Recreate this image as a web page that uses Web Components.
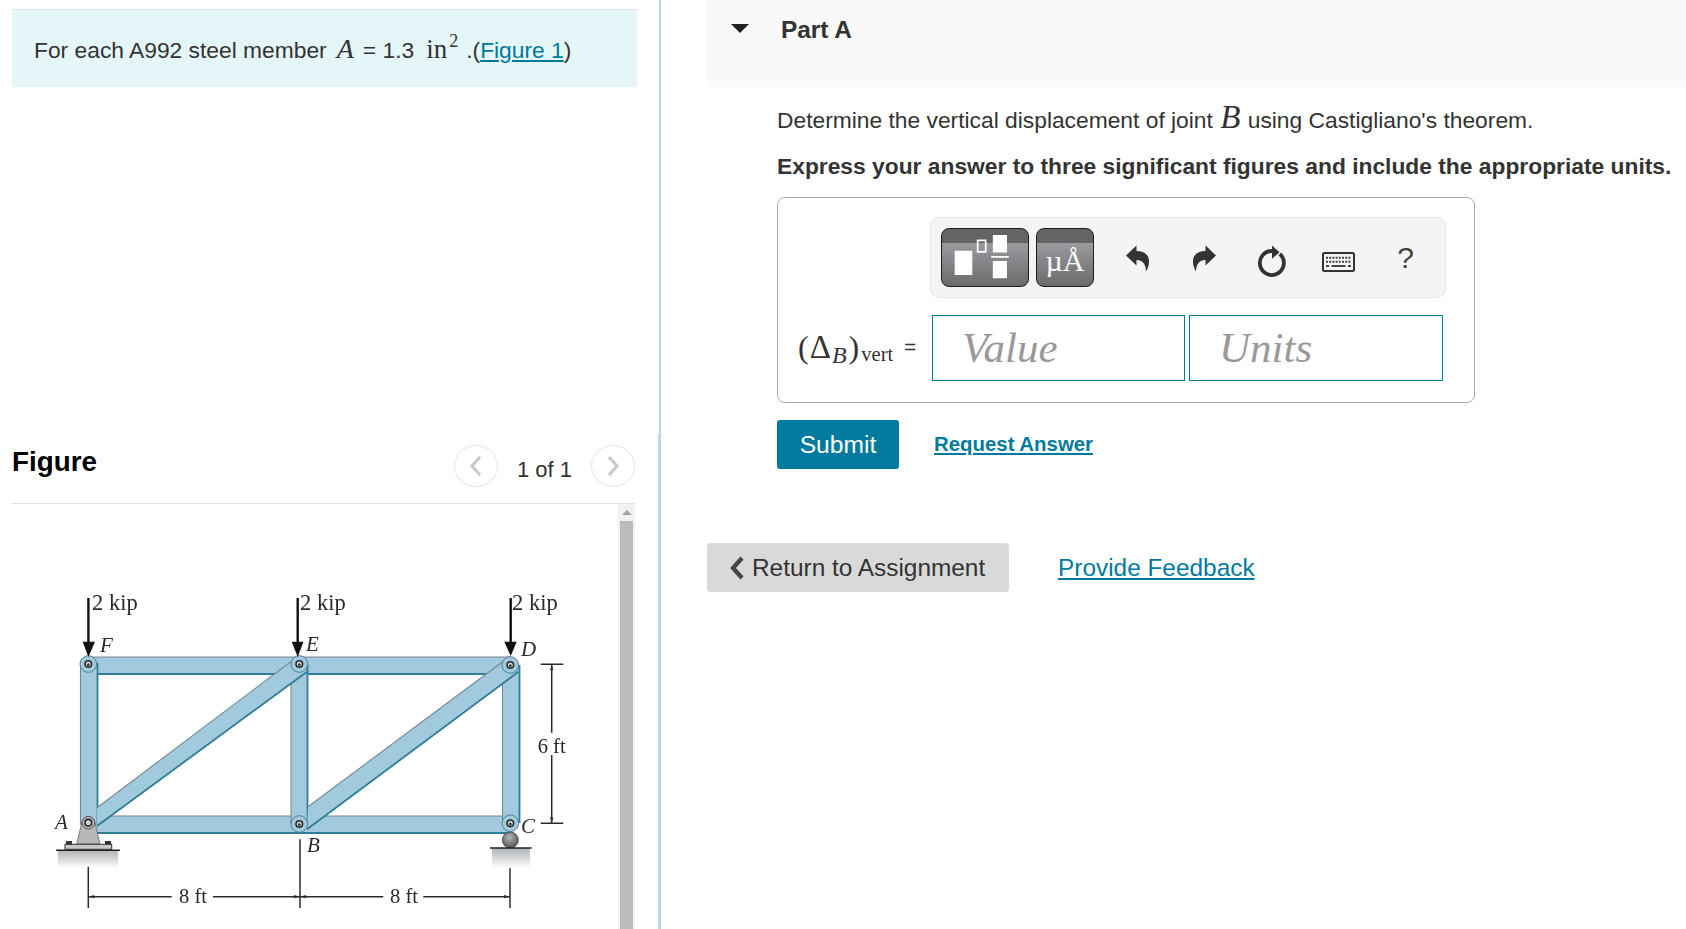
<!DOCTYPE html>
<html lang="en">
<head>
<meta charset="utf-8">
<title>Part A</title>
<style>
  html, body { margin: 0; height: 100%; background: #fff; overflow: hidden; }
  body { font-family: "Liberation Sans", Arial, sans-serif; color: #333; }
</style>
</head>
<body>
<item-layout>
  <div slot="left">
    <intro-banner>For each A992 steel member<math-var style="margin:0 9px 0 10px">A</math-var>= 1.3<math-unit></math-unit><span style="margin-left:8px">.(</span><text-link>Figure 1</text-link>)</intro-banner>
    <figure-panel></figure-panel>
  </div>
  <div slot="right">
    <part-head>Part A</part-head>
    <part-body>
      <p style="margin:0 0 16px;height:30px;line-height:30px">Determine the vertical displacement of joint <math-var style="margin:0 1px;font-size:33px;line-height:0">B</math-var> using Castigliano's theorem.</p>
      <p style="margin:0 0 16px;height:30px;line-height:30px;font-weight:bold;white-space:nowrap">Express your answer to three significant figures and include the appropriate units.</p>
      <answer-box></answer-box>
      <answer-actions></answer-actions>
    </part-body>
    <page-footer></page-footer>
  </div>
</item-layout>

<script>
function comp(tag, html) {
  customElements.define(tag, class extends HTMLElement {
    constructor() {
      super();
      this.attachShadow({ mode: "open" }).innerHTML = html.trim();
    }
  });
}

comp("item-layout", `
  <style>
    :host { display: flex; height: 929px; overflow: hidden; }
    .left { width: 658px; flex: none; }
    .rule { width: 3px; flex: none; display: flex; flex-direction: column; }
    .rule .a { height: 434px; width: 2px; margin-left: 1px; background: #c3d3e6; }
    .rule .b { flex: 1; background: #c3d3e6; }
    .right { margin-left: 46px; flex: 1; min-width: 0; }
  </style>
  <div class="left"><slot name="left"></slot></div>
  <div class="rule"><div class="a"></div><div class="b"></div></div>
  <div class="right"><slot name="right"></slot></div>
`);

comp("math-var", `<style>:host { display: inline-block; font: italic 28px/1 "Liberation Serif", serif; color: #333; }</style><slot></slot>`);

comp("math-unit", `<style>
    :host { display: inline-block; margin-left: 12px; font: 27px/1 "Liberation Serif", serif; }
    sup { font-size: 18px; line-height: 0; vertical-align: 11px; margin-left: 2px; }
  </style>in<sup>2</sup>`);

comp("text-link", `<style>:host { display: inline; color: #007a9e; text-decoration: underline; }</style><slot></slot>`);

comp("intro-banner", `
  <style>
    :host {
      display: block; box-sizing: border-box; margin: 9px 0 0 12px; width: 625px; height: 78px;
      padding: 24px 0 0 22px; background: #e5f6f8; border-top: 1px solid #dbe3e6;
      font-size: 22.8px; line-height: 32px; color: #333; white-space: nowrap;
    }
  </style>
  <slot></slot>
`);

comp("pager-button", `
  <style>
    :host {
      display: flex; align-items: center; justify-content: center; box-sizing: border-box;
      width: 44px; height: 42px; border: 1px solid #e6e6e6; border-radius: 50%;
    }
  </style>
  <slot></slot>
`);

comp("figure-pager", `
  <style>
    :host { display: flex; align-items: flex-start; }
    span { width: 93px; text-align: center; font-size: 22px; line-height: 42px; padding-top: 4px; color: #333; }
    svg { display: block; }
  </style>
  <pager-button><svg width="14" height="22" viewBox="0 0 14 22"><path d="M11 2 3 11l8 9" fill="none" stroke="#c9c9c9" stroke-width="3"/></svg></pager-button>
  <span>1 of 1</span>
  <pager-button><svg width="14" height="22" viewBox="0 0 14 22"><path d="M3 2l8 9-8 9" fill="none" stroke="#c9c9c9" stroke-width="3"/></svg></pager-button>
`);

comp("fake-scrollbar", `
  <style>
    :host { display: flex; flex-direction: column; box-sizing: border-box; width: 17px; padding: 0 2px; background: #f1f1f1; }
    .up { height: 17px; display: flex; align-items: center; justify-content: center; }
    .up i { width: 0; height: 0; border: 5px solid transparent; border-top: 0; border-bottom: 5px solid #a3a3a3; }
    .thumb { flex: 1; background: #bbb; }
  </style>
  <div class="up"><i></i></div>
  <div class="thumb"></div>
`);

comp("truss-figure", `
  <style>
    :host { display: block; width: 606px; height: 425px; }
    svg { display: block; filter: blur(.6px); }
    text { font-family: "Liberation Serif", serif; fill: #2a2a2a; }
    .lbl { font-style: italic; font-size: 21px; }
    .kip { font-size: 22.5px; }
    .dim { font-size: 20.5px; }
    .m { fill: #a2cade; }
    .hi { stroke: #78878f; stroke-width: 1.1; fill: none; }
    .lo { stroke: #2f7d96; stroke-width: 1.8; fill: none; }
    .d { stroke: #2b2b2b; stroke-width: 1.5; fill: none; }
    .f { stroke: #111; stroke-width: 2.4; fill: none; }
  </style>
  <svg width="606" height="425" viewBox="12 504 606 425">
    <defs>
      <linearGradient id="sh" x1="0" y1="0" x2="0" y2="1">
        <stop offset="0" stop-color="#aeb2b6"/><stop offset="1" stop-color="#fff"/>
      </linearGradient>
      <radialGradient id="ball" cx=".45" cy=".35" r=".7">
        <stop offset="0" stop-color="#b5b5b5"/><stop offset="1" stop-color="#4d4d4d"/>
      </radialGradient>
      <g id="pin">
        <circle r="8.3" fill="#a2cade" stroke="#4d7f92" stroke-width="1"/>
        <circle r="3.3" fill="#cfd6d8" stroke="#2b2b2b" stroke-width="1.6"/>
        <circle r="1.5" cy=".7" fill="#444"/>
      </g>
    </defs>

    <!-- shadows and supports -->
    <rect x="58" y="850" width="60" height="18" fill="url(#sh)"/>
    <rect x="492" y="848" width="38" height="20" fill="url(#sh)"/>

    <!-- horizontal members -->
    <rect class="m" x="88" y="816" width="423" height="17"/>
    <path class="hi" d="M88 816H511"/><path class="lo" d="M88 833H511"/>
    <rect class="m" x="88" y="657" width="423" height="17"/>
    <path class="hi" d="M88 657H511"/><path class="lo" d="M88 674H511"/>

    <!-- verticals -->
    <rect class="m" x="80.5" y="663" width="17" height="162"/>
    <path class="hi" d="M80.5 663V825"/><path class="lo" d="M97.5 663V825"/>
    <rect class="m" x="291" y="664" width="16.5" height="160"/>
    <path class="hi" d="M291 664V824"/><path class="lo" d="M307.5 664V824"/>
    <rect class="m" x="502.5" y="665" width="17" height="158"/>
    <path class="hi" d="M502.5 665V823"/><path class="lo" d="M519.5 665V823"/>

    <!-- diagonals -->
    <path class="m" d="M97 807.7 293 660 307 671.7 97 826Z"/>
    <path class="hi" d="M97 807.7 293 660"/><path class="lo" d="M97 826 307 671.7"/>
    <path class="m" d="M308 806.7 505 660 518.5 671.7 307 829.3Z"/>
    <path class="hi" d="M308 806.7 505 660"/><path class="lo" d="M307 829.3 518.5 671.7"/>

    <!-- pins -->
    <use href="#pin" x="88.3" y="664"/>
    <use href="#pin" x="299.3" y="664"/>
    <use href="#pin" x="510.3" y="665"/>
    <use href="#pin" x="299.3" y="824"/>
    <use href="#pin" x="510.3" y="823.3"/>

    <!-- support at A -->
    <path d="M81.7 823C83 815 94 815 95 823L100 844H76.7Z" fill="#b8b8b8" stroke="#666" stroke-width=".8"/>
    <circle cx="88.3" cy="822.7" r="6.3" fill="#b8b8b8" stroke="#555" stroke-width="1"/>
    <circle cx="88.3" cy="822.7" r="3.3" fill="#cfd6d8" stroke="#2b2b2b" stroke-width="1.6"/>
    <rect x="65" y="844.3" width="46.7" height="5" fill="#c9c9c9" stroke="#333" stroke-width="1"/>
    <rect x="66" y="841" width="6" height="3.5" fill="#333"/><rect x="105" y="841" width="6" height="3.5" fill="#333"/>
    <path d="M56 850.3H120" stroke="#222" stroke-width="1.6"/>

    <!-- roller at C -->
    <circle cx="510.3" cy="840" r="8" fill="url(#ball)" stroke="#444" stroke-width=".8"/>
    <path d="M490 848H531.7" stroke="#222" stroke-width="1.6"/>

    <!-- loads -->
    <path class="f" d="M88.4 598V645"/><path d="M82.7 641.7H95L88.4 657Z" fill="#111"/>
    <path class="f" d="M297.7 598V645"/><path d="M291.7 641.7H303.5L297.7 657Z" fill="#111"/>
    <path class="f" d="M510.7 598V645"/><path d="M504.3 641.7H516.7L510.7 656Z" fill="#111"/>
    <text class="kip" x="92" y="610">2 kip</text>
    <text class="kip" x="300" y="610">2 kip</text>
    <text class="kip" x="512" y="610">2 kip</text>

    <!-- joint letters -->
    <text class="lbl" x="100" y="652">F</text>
    <text class="lbl" x="306" y="651">E</text>
    <text class="lbl" x="521" y="656">D</text>
    <text class="lbl" x="55" y="829">A</text>
    <text class="lbl" x="307" y="852">B</text>
    <text class="lbl" x="521" y="833">C</text>

    <!-- dimensions -->
    <path class="d" d="M88.3 866.7V908M300 839.3V908M510 868.3V908"/>
    <path class="d" d="M88.3 896.7H171.7M213 896.7H383.3M423.3 896.7H510"/>
    <path d="M88.3 896.7l6-1.6v3.2ZM300 896.7l-6-1.6v3.2ZM300 896.7l6-1.6v3.2ZM510 896.7l-6-1.6v3.2Z" fill="#2b2b2b"/>
    <text class="dim" x="193" y="902.7" text-anchor="middle">8 ft</text>
    <text class="dim" x="404" y="902.7" text-anchor="middle">8 ft</text>
    <path class="d" d="M540.7 664.3H563.3M540.7 823.3H563.3M551.7 664.3V732.7M551.7 755V823.3"/>
    <path d="M551.7 664.3l-1.6 6h3.2ZM551.7 823.3l-1.6-6h3.2Z" fill="#2b2b2b"/>
    <text class="dim" x="551.7" y="752.7" text-anchor="middle">6 ft</text>
  </svg>
`);

comp("figure-panel", `
  <style>
    :host { display: block; margin: 358px 0 0 12px; width: 623px; }
    header {
      display: flex; justify-content: space-between; box-sizing: border-box; height: 59px;
      border-bottom: 1px solid #ddd;
    }
    h2 { margin: 1px 0 0; font-size: 27.8px; line-height: 32px; color: #000; }
    .view { display: flex; height: 425px; }
  </style>
  <header><h2>Figure</h2><figure-pager></figure-pager></header>
  <div class="view"><truss-figure></truss-figure><fake-scrollbar></fake-scrollbar></div>
`);

comp("part-head", `
  <style>
    :host {
      display: flex; align-items: flex-start; gap: 32px; box-sizing: border-box; height: 87px;
      padding: 14px 0 0 24px; background: #f9f9f9;
      font-size: 24.4px; line-height: 32px; font-weight: bold; color: #333;
    }
    i { width: 0; height: 0; margin-top: 10px; border: 9px solid transparent; border-bottom: 0; border-top: 9px solid #222; }
  </style>
  <i></i><slot></slot>
`);

comp("part-body", `
  <style>
    :host { display: block; padding: 18px 0 0 70px; font-size: 22.8px; color: #333; }
  </style>
  <slot></slot>
`);

comp("tool-button", `
  <style>
    :host {
      display: flex; align-items: center; justify-content: center; box-sizing: border-box; height: 59px;
      border: 1px solid #1c1c1c; border-radius: 8px; color: #fff;
      background: linear-gradient(#646464 0 25%, #9a9a9f 25%, #6b6b6d 100%);
    }
  </style>
  <slot></slot>
`);

comp("answer-toolbar", `
  <style>
    :host {
      display: flex; align-items: center; box-sizing: border-box; width: 516px; height: 81px;
      margin-left: 152px; padding: 0 0 0 10px; background: #f4f4f4; border: 1px solid #e6e6e6; border-radius: 9px;
    }
    tool-button.a { width: 88px; }
    tool-button.b { width: 58px; margin-left: 7px; font: 30px/1 "Liberation Serif", serif; padding-top: 6px; }
    .tools { display: flex; align-items: center; margin-left: 26px; }
    .tools > * { flex: none; display: block; }
    .q { width: 31px; text-align: center; font-size: 30px; line-height: 34px; color: #444; }
  </style>
  <tool-button class="a">
    <svg width="88" height="59" viewBox="0 0 88 59">
      <path fill="#fff" d="M13 22.5h18v25H13zM52 6.5h14.5v18H52zM50.3 28h18v1.8h-18zM52 33h14.5v17.7H52z"/>
      <rect x="36.5" y="12" width="8.2" height="11.7" fill="none" stroke="#fff" stroke-width="1.8"/>
    </svg>
  </tool-button>
  <tool-button class="b">&micro;&Aring;</tool-button>
  <div class="tools">
    <svg width="36" height="40" viewBox="0 0 36 40" style="margin-top:-4px"><path fill="#333" d="M6 19.5 16.5 9.5V15C24 15 29.5 19 29 26 28.9 30 27.5 33 26 35.5 26 30 24 24 16.5 24V29.5Z"/></svg>
    <svg width="36" height="40" viewBox="0 0 36 40" style="margin:-4px 0 0 31px"><path transform="translate(35 0) scale(-1 1)" fill="#333" d="M6 19.5 16.5 9.5V15C24 15 29.5 19 29 26 28.9 30 27.5 33 26 35.5 26 30 24 24 16.5 24V29.5Z"/></svg>
    <svg width="36" height="40" viewBox="0 0 36 40" style="margin:0 0 0 31px"><path d="M25.8 16A12 12 0 1 1 18 13" fill="none" stroke="#333" stroke-width="3.8"/><path fill="#333" d="M18 7.5 25.5 14.3 18 20.7Z"/></svg>
    <svg width="33" height="20" viewBox="0 0 33 20" style="margin:8px 0 0 32px">
      <rect x="1" y="1" width="31" height="18" rx="1.5" fill="#f4f4f4" stroke="#333" stroke-width="2"/>
      <path d="M4 5.7H29M4 9.7H29" stroke="#444" stroke-width="2" stroke-dasharray="2 1.2"/>
      <path d="M4 14H7M9.5 14H23.5M26 14H29" stroke="#444" stroke-width="2"/>
    </svg>
    <div class="q" style="margin-left:35px">?</div>
  </div>
`);

comp("answer-input", `
  <style>
    :host {
      display: flex; align-items: center; box-sizing: border-box; width: 253px; height: 66px; padding: 0 0 2px 29px;
      border: 1px solid #007a9e; background: #fff;
      font: italic 43px/1 "Liberation Serif", serif; color: #999;
    }
  </style>
  <slot></slot>
`);

comp("answer-box", `
  <style>
    :host {
      display: block; box-sizing: border-box; width: 698px; height: 206px; padding-top: 19px;
      border: 1px solid #aaa; border-radius: 8px;
    }
    .row { display: flex; align-items: center; margin-top: 17px; }
    .label {
      flex: none; display: flex; align-items: baseline; box-sizing: border-box; width: 154px; padding: 0 0 2px 20px; white-space: nowrap;
      font: 33px/1 "Liberation Serif", serif; color: #333;
    }
    .label .p { font-size: 32px; }
    .label .d { margin-left: 1px; }
    .label .s { font-size: 24px; font-style: italic; position: relative; top: 5px; margin-left: 1px; margin-right: 2px; }
    .label .v { font-size: 20.6px; position: relative; top: 3px; margin-left: 2px; }
    .label .e { font: 20.5px "Liberation Sans", sans-serif; margin-left: 11px; position: relative; top: -4px; }
    answer-input + answer-input { margin-left: 4px; width: 254px; }
  </style>
  <answer-toolbar></answer-toolbar>
  <div class="row">
    <div class="label"><span class="p">(</span><span class="d">&Delta;</span><span class="s">B</span><span class="p">)</span><span class="v">vert</span><span class="e">=</span></div>
    <answer-input>Value</answer-input>
    <answer-input>Units</answer-input>
  </div>
`);

comp("answer-actions", `
  <style>
    :host { display: flex; align-items: center; gap: 35px; margin-top: 17px; }
    .submit {
      box-sizing: border-box; width: 122px; height: 49px; line-height: 49px; text-align: center;
      background: #007a9e; color: #fff; font-size: 24.6px; border-radius: 3px;
    }
    .req { color: #007a9e; font-size: 20.4px; font-weight: bold; text-decoration: underline; }
  </style>
  <div class="submit">Submit</div>
  <div class="req">Request Answer</div>
`);

comp("page-footer", `
  <style>
    :host { display: flex; align-items: center; gap: 49px; margin-top: 74px; font-size: 24.4px; }
    .back {
      display: flex; align-items: center; box-sizing: border-box; width: 302px; height: 49px; padding-left: 23px;
      gap: 8px; background: #d9d9d9; color: #333; border-radius: 4px;
    }
    .back svg { display: block; }
    .fb { color: #007a9e; text-decoration: underline; }
  </style>
  <div class="back"><svg width="14" height="24" viewBox="0 0 14 24"><path d="M12 2 3 12l9 10" fill="none" stroke="#444" stroke-width="4.2"/></svg>Return to Assignment</div>
  <div class="fb">Provide Feedback</div>
`);
</script>
</body>
</html>
